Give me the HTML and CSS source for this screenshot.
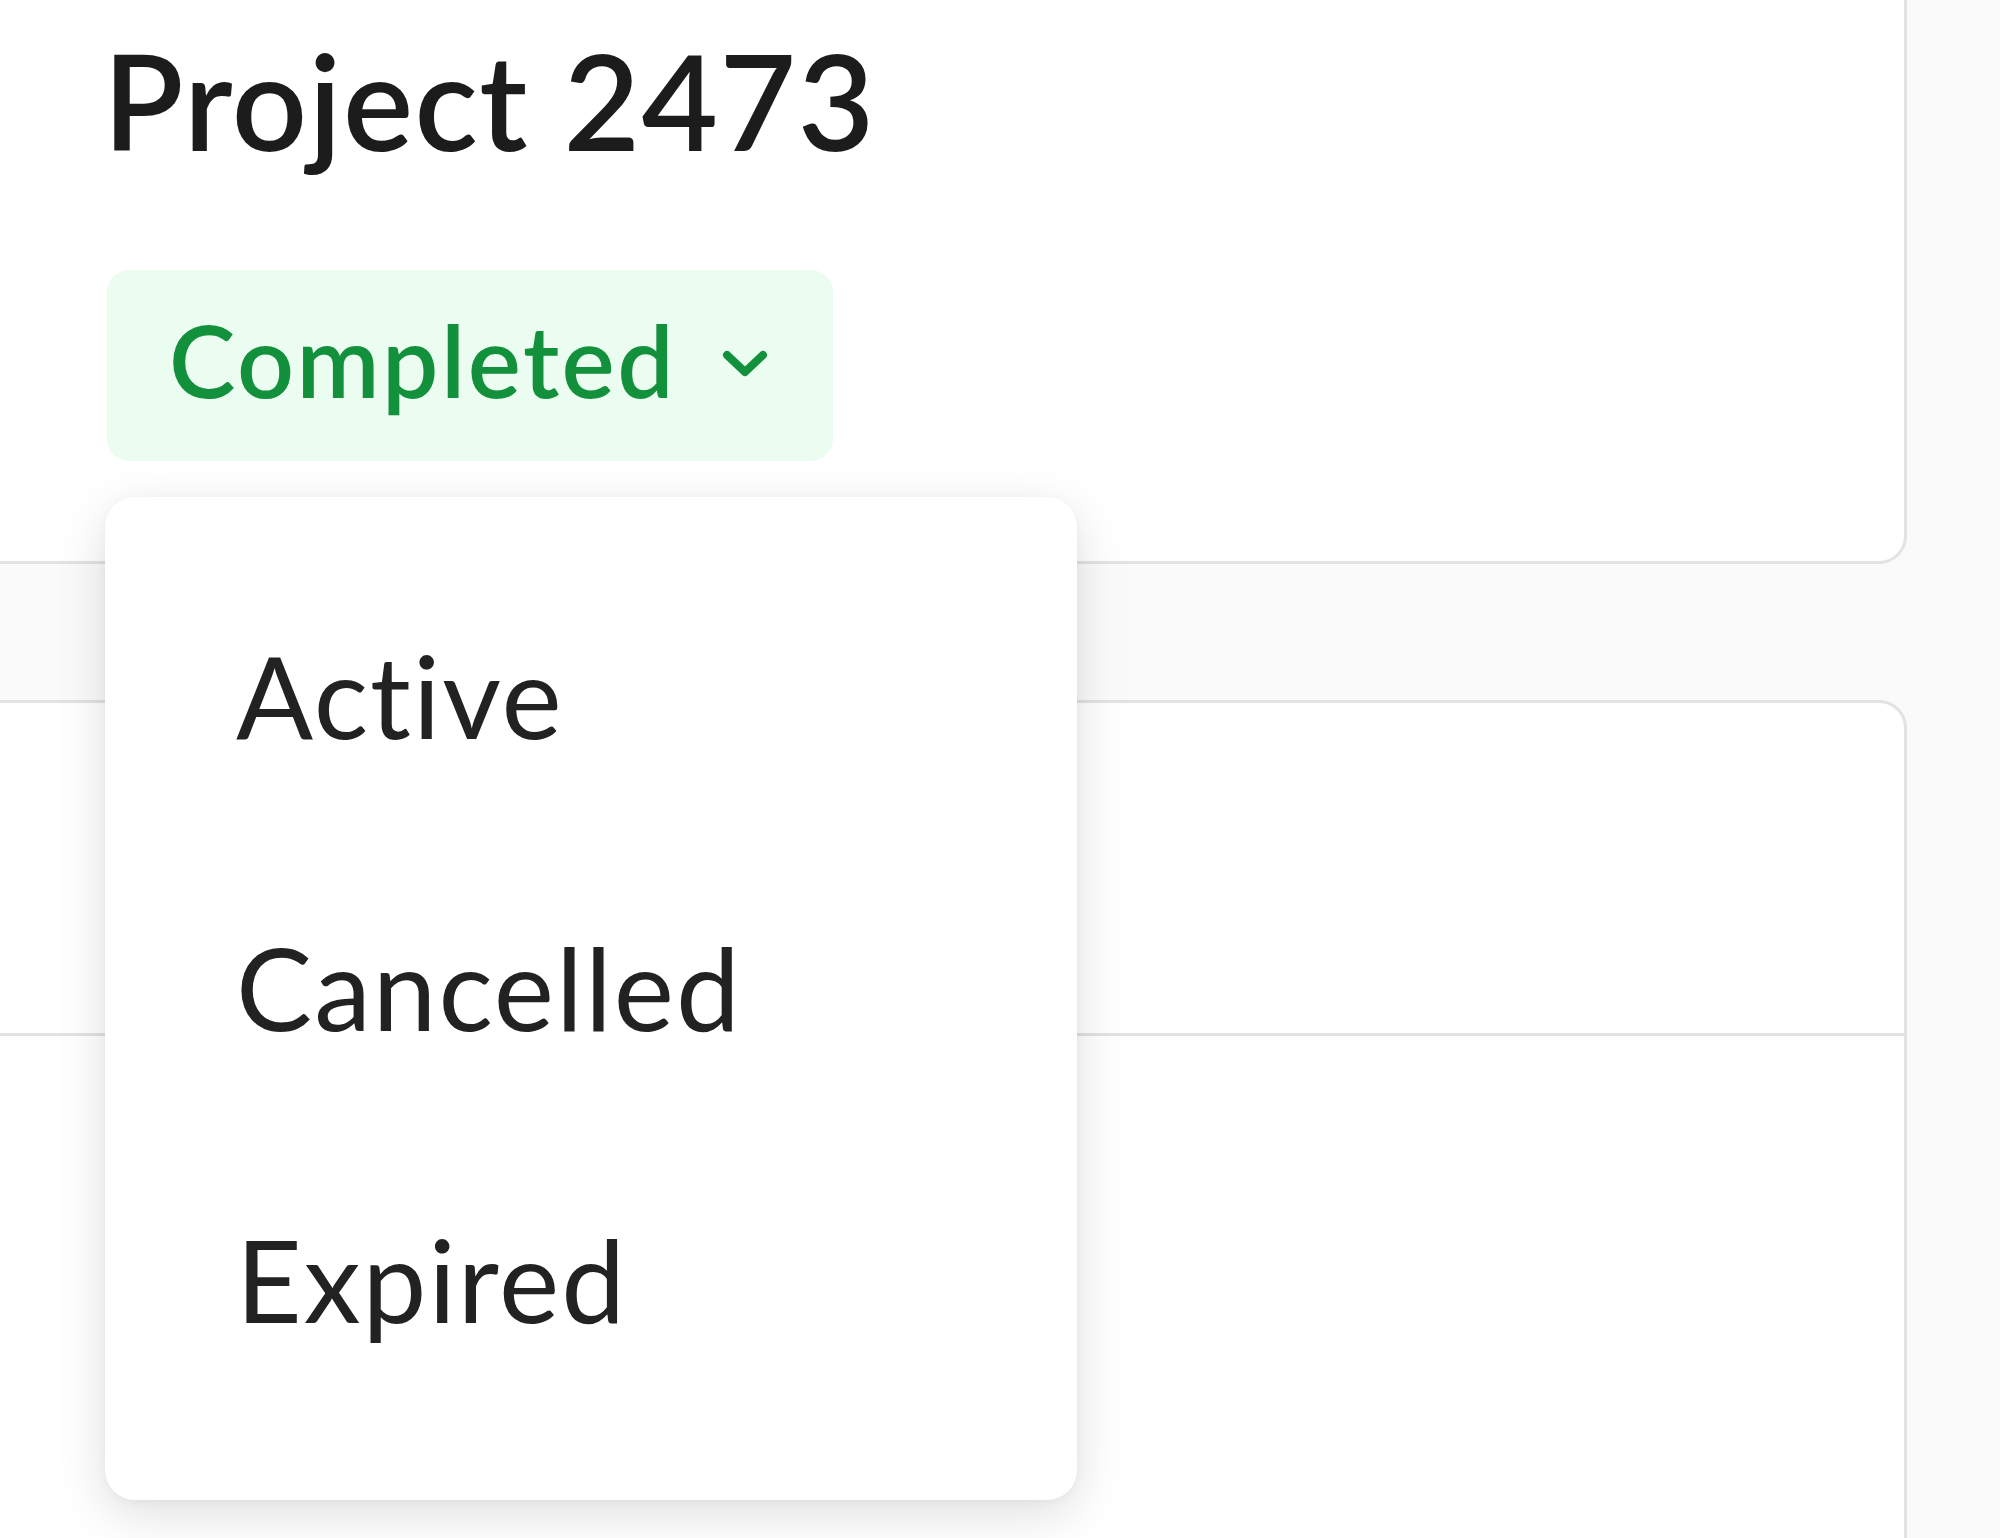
FILE: index.html
```html
<!DOCTYPE html>
<html lang="en">

<head>
    <meta charset="UTF-8">
    <title>Project 2473</title>
    <meta name="viewport" content="width=device-width, initial-scale=1.0">
    <link rel="stylesheet" href="styles.css">
</head>

<body>
    <div class="page">
        <section class="card card-project">
            <h1 class="project-title">Project 2473</h1>
            <div class="status">
                <button class="status-badge" id="statusButton">
                    <span>Completed</span>
                    <svg class="chevron" width="46" height="27" viewBox="0 0 46 27">
                        <polyline points="5,5 23,22 41,5" fill="none" stroke="currentColor" stroke-width="8" stroke-linecap="round" stroke-linejoin="round"/>
                    </svg>
                </button>
                <ul class="status-menu">
                    <li>Active</li>
                    <li>Cancelled</li>
                    <li>Expired</li>
                </ul>
            </div>
        </section>

        <section class="card card-details">
            <div class="card-header"></div>
            <div class="card-body"></div>
        </section>
    </div>
</body>
</html>
```

FILE: styles.css
```css
/* Base de la página */
body, html {
margin: 0;
padding: 0;
height: 100%;
overflow: hidden;
}

body {
background-color: #fafafa;
font-family: Lato, "Open Sans", sans-serif;
color: #1d1d1d;
}

.page {
padding-right: 93px;
}

/* Tarjetas */
.card {
background-color: #fff;
border: 3px solid #e2e2e2;
border-radius: 28px;
margin-left: -40px;
padding-left: 144px;
}

.card-project {
margin-top: -60px;
padding-top: 79px;
padding-bottom: 100px;
}

.project-title {
margin: 0 0 0 -4px;
font-size: 132px;
font-weight: 600;
letter-spacing: 1.5px;
line-height: 156px;
color: #1c1c1c;
}

/* Estado con menú desplegable */
.status {
position: relative;
display: inline-block;
margin-top: 92px;
}

.status-badge {
display: flex;
align-items: center;
gap: 46px;
border: none;
border-radius: 22px;
background-color: #ebfcf1;
color: #13903c;
font-family: inherit;
font-size: 100px;
font-weight: 600;
letter-spacing: 2.5px;
line-height: 120px;
padding: 29px 65px 42px 62px;
cursor: pointer;
}

.chevron {
display: block;
margin-top: 8px;
}

.status-menu {
position: absolute;
top: calc(100% + 36px);
left: -2px;
width: 972px;
margin: 0;
padding: 52px 0 75px;
list-style: none;
background-color: #fff;
border-radius: 30px;
box-shadow: 0 14px 50px rgba(0, 0, 0, 0.13), 0 2px 8px rgba(0, 0, 0, 0.04);
z-index: 10;
}

.status-menu li {
font-size: 114px;
letter-spacing: 2px;
line-height: 136px;
padding: 78px 126px 78px 131px;
color: #222;
cursor: pointer;
}

/* Segunda tarjeta */
.card-details {
margin-top: 136px;
min-height: 1200px;
padding-left: 0;
}

.card-header {
height: 330px;
border-bottom: 3px solid #e2e2e2;
}
```
